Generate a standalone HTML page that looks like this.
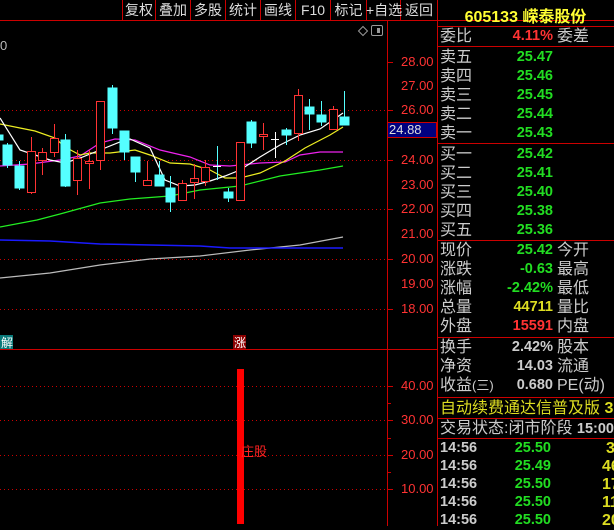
<!DOCTYPE html>
<html><head><meta charset="utf-8"><style>
body{margin:0;background:#000;width:614px;height:526px;overflow:hidden;position:relative;font-family:"Liberation Sans","Noto Sans CJK SC",sans-serif;}
.a{position:absolute;white-space:nowrap}
.btn{position:absolute;top:0;height:20px;line-height:20px;color:#ddd;font-size:14px;text-align:center;white-space:nowrap}
.ax{position:absolute;color:#ff3333;font-size:13px;left:401px}
.rl{position:absolute;left:440px;color:#ccc;font-size:16px;line-height:19px;white-space:nowrap}
.rv{position:absolute;width:114px;left:439px;text-align:right;font-weight:bold;font-size:14.5px;line-height:19px;white-space:nowrap}
.rr{position:absolute;left:557px;color:#ccc;font-size:16px;line-height:19px;white-space:nowrap}
.hl{position:absolute;left:437px;width:177px;height:1px;background:#c00}
.g{color:#22dd22}
</style></head><body>
<svg width="614" height="526" style="position:absolute;left:0;top:0">
<g stroke="#c00" stroke-width="1" fill="none">
<line x1="0" y1="20.5" x2="614" y2="20.5"/>
<line x1="387.5" y1="20" x2="387.5" y2="526"/>
<line x1="437.5" y1="0" x2="437.5" y2="526"/>
<line x1="0" y1="349.5" x2="437" y2="349.5"/>
<line x1="122.5" y1="0" x2="122.5" y2="20"/><line x1="155.5" y1="0" x2="155.5" y2="20"/><line x1="190.5" y1="0" x2="190.5" y2="20"/><line x1="225.5" y1="0" x2="225.5" y2="20"/><line x1="260.5" y1="0" x2="260.5" y2="20"/><line x1="295.5" y1="0" x2="295.5" y2="20"/><line x1="330.5" y1="0" x2="330.5" y2="20"/><line x1="366.5" y1="0" x2="366.5" y2="20"/><line x1="400.5" y1="0" x2="400.5" y2="20"/>
<g stroke-dasharray="1,3">
<line x1="0" y1="110.5" x2="387" y2="110.5"/><line x1="0" y1="160.5" x2="387" y2="160.5"/><line x1="0" y1="209.5" x2="387" y2="209.5"/><line x1="0" y1="259.5" x2="387" y2="259.5"/><line x1="0" y1="309.5" x2="387" y2="309.5"/>
<line x1="0" y1="386.5" x2="387" y2="386.5"/><line x1="0" y1="420.5" x2="387" y2="420.5"/><line x1="0" y1="455.5" x2="387" y2="455.5"/><line x1="0" y1="489.5" x2="387" y2="489.5"/>
</g>
<line x1="387" y1="62.5" x2="393" y2="62.5"/><line x1="387" y1="110.5" x2="393" y2="110.5"/><line x1="387" y1="160.5" x2="393" y2="160.5"/><line x1="387" y1="209.5" x2="393" y2="209.5"/><line x1="387" y1="259.5" x2="393" y2="259.5"/><line x1="387" y1="309.5" x2="393" y2="309.5"/>
<line x1="387" y1="386.5" x2="393" y2="386.5"/><line x1="387" y1="403.5" x2="391" y2="403.5"/><line x1="387" y1="420.5" x2="393" y2="420.5"/><line x1="387" y1="438.5" x2="391" y2="438.5"/><line x1="387" y1="455.5" x2="393" y2="455.5"/><line x1="387" y1="472.5" x2="391" y2="472.5"/><line x1="387" y1="489.5" x2="393" y2="489.5"/>
</g>
<g fill="none" stroke-width="1.2">
<polyline stroke="#bbb" points="0,278 50,273 100,265 150,259 200,256 250,250 300,245 343,237"/>
<polyline stroke="#1a1aff" stroke-width="1.5" points="0,240 50,241 100,244 150,245 200,246 230,248 300,248 343,248"/>
<polyline stroke="#22ee22" points="0,227 37,220 60,214 100,203 130,199 170,196 200,190 240,186 280,176 320,170 343,166"/>
<polyline stroke="#ee22ee" points="0,166 30,164 60,160 80,156 100,143 115,139 135,140 160,150 190,157 210,165 230,166 260,163 285,162 300,155 320,152 343,152"/>
<polyline stroke="#eeee22" points="0,124 20,128 35,131 55,138 65,147 80,155 90,153 110,153 135,150 150,155 170,163 190,164 210,170 225,178 240,178 260,173 285,161 305,148 330,135 343,127"/>
<polyline stroke="#fff" points="0,118 20,150 50,160 65,163 80,158 100,150 120,142 130,139 150,148 165,180 180,186 195,185 210,181 225,176 240,170 260,157 280,145 300,135 320,129 343,113"/>
</g>
<g stroke-width="1">
<g stroke="#55ffff" fill="#55ffff">
<rect x="0" y="135" width="3" height="5"/>
<line x1="7.5" y1="143" x2="7.5" y2="168"/><rect x="3" y="145" width="9" height="20"/>
<line x1="19.5" y1="161" x2="19.5" y2="190"/><rect x="15" y="166" width="9" height="22"/>
<line x1="65.5" y1="134" x2="65.5" y2="187"/><rect x="61" y="140" width="9" height="46"/>
<line x1="112.5" y1="85" x2="112.5" y2="134"/><rect x="108" y="88" width="9" height="40"/>
<line x1="124.5" y1="131" x2="124.5" y2="160"/><rect x="120" y="131" width="9" height="21"/>
<line x1="135.5" y1="157" x2="135.5" y2="182"/><rect x="131" y="157" width="9" height="15"/>
<line x1="159.5" y1="161" x2="159.5" y2="186"/><rect x="155" y="175" width="9" height="11"/>
<line x1="170.5" y1="176" x2="170.5" y2="212"/><rect x="166" y="188" width="9" height="14"/>
<line x1="217.5" y1="146" x2="217.5" y2="180"/>
<line x1="228.5" y1="188" x2="228.5" y2="202"/><rect x="224" y="192" width="9" height="6"/>
<line x1="251.5" y1="120" x2="251.5" y2="148"/><rect x="247" y="122" width="9" height="21"/>
<line x1="286.5" y1="128" x2="286.5" y2="145"/><rect x="282" y="130" width="9" height="5"/>
<line x1="309.5" y1="99" x2="309.5" y2="130"/><rect x="305" y="107" width="9" height="7"/>
<line x1="321.5" y1="101" x2="321.5" y2="126"/><rect x="317" y="115" width="9" height="7"/>
<line x1="344.5" y1="91" x2="344.5" y2="125"/><rect x="340" y="117" width="9" height="8"/>
</g>
<g stroke="#ff3333" fill="#000">
<line x1="31.5" y1="137" x2="31.5" y2="194"/><rect x="27.5" y="151.5" width="8" height="41"/>
<line x1="42.5" y1="148" x2="42.5" y2="175"/><rect x="38.5" y="152.5" width="8" height="8"/>
<line x1="54.5" y1="124" x2="54.5" y2="157"/><rect x="50.5" y="138.5" width="8" height="14"/>
<line x1="77.5" y1="150" x2="77.5" y2="195"/><rect x="73.5" y="158.5" width="8" height="22"/>
<line x1="89.5" y1="150" x2="89.5" y2="189"/><rect x="85.5" y="161.5" width="8" height="2"/>
<line x1="100.5" y1="101" x2="100.5" y2="170"/><rect x="96.5" y="101.5" width="8" height="59"/>
<line x1="147.5" y1="161" x2="147.5" y2="186"/><rect x="143.5" y="180.5" width="8" height="5"/>
<line x1="182.5" y1="180" x2="182.5" y2="200"/><rect x="178.5" y="183.5" width="8" height="17"/>
<line x1="194.5" y1="164" x2="194.5" y2="199"/><rect x="190.5" y="178.5" width="8" height="4"/>
<line x1="205.5" y1="160" x2="205.5" y2="186"/><rect x="201.5" y="167.5" width="8" height="14"/>
<line x1="240.5" y1="142" x2="240.5" y2="201"/><rect x="236.5" y="142.5" width="8" height="58"/>
<line x1="263.5" y1="123" x2="263.5" y2="150"/><rect x="259.5" y="134.5" width="8" height="2"/>
<line x1="298.5" y1="89" x2="298.5" y2="141"/><rect x="294.5" y="95.5" width="8" height="38"/>
<line x1="333.5" y1="106" x2="333.5" y2="129"/><rect x="329.5" y="109.5" width="8" height="20"/>
</g>
<g stroke="#fff"><line x1="213" y1="166.5" x2="221" y2="166.5"/><line x1="271" y1="139.5" x2="279" y2="139.5"/><line x1="275.5" y1="132" x2="275.5" y2="158"/></g>
</g>
<rect x="237" y="369" width="7" height="155" fill="#ff0000"/>
<rect x="0" y="335" width="13" height="14" fill="#0a7a7a"/>
<rect x="233" y="335" width="13" height="14" fill="#8b0000"/>
<path d="M358.5,31 L363,26.5 L367.5,31 L363,35.5 Z" fill="none" stroke="#999"/>
<rect x="371.5" y="25.5" width="11" height="10" rx="1.5" fill="none" stroke="#999"/><rect x="377" y="28" width="3" height="5" fill="#999"/>
<rect x="387.5" y="122.5" width="49" height="15" fill="#000080" stroke="#c00"/>
</svg>
<div class="btn" style="left:123px;width:32px">复权</div>
<div class="btn" style="left:156px;width:34px">叠加</div>
<div class="btn" style="left:191px;width:34px">多股</div>
<div class="btn" style="left:226px;width:34px">统计</div>
<div class="btn" style="left:261px;width:34px">画线</div>
<div class="btn" style="left:296px;width:34px">F10</div>
<div class="btn" style="left:331px;width:35px">标记</div>
<div class="btn" style="left:366px;width:34px">+自选</div>
<div class="btn" style="left:401px;width:36px">返回</div>
<div class="a" style="left:0;top:38px;color:#bbb;font-size:13px">0</div>
<div class="a" style="left:1px;top:334px;color:#fff;font-size:12px">解</div>
<div class="a" style="left:234px;top:334px;color:#fff;font-size:12px">涨</div>
<div class="a" style="left:241px;top:441px;color:#ff2222;font-size:13px">庄股</div>
<div class="ax" style="top:54px">28.00</div>
<div class="ax" style="top:78px">27.00</div>
<div class="ax" style="top:102px">26.00</div>
<div class="a" style="left:389px;top:122px;color:#ddd;font-size:13px">24.88</div>
<div class="ax" style="top:152px">24.00</div>
<div class="ax" style="top:177px">23.00</div>
<div class="ax" style="top:201px">22.00</div>
<div class="ax" style="top:226px">21.00</div>
<div class="ax" style="top:251px">20.00</div>
<div class="ax" style="top:276px">19.00</div>
<div class="ax" style="top:301px">18.00</div>
<div class="ax" style="top:378px">40.00</div>
<div class="ax" style="top:412px">30.00</div>
<div class="ax" style="top:447px">20.00</div>
<div class="ax" style="top:481px">10.00</div>
<div class="a" style="left:437px;width:177px;top:3px;text-align:center;color:#ffff33;font-size:16px;font-weight:bold">605133 嵘泰股份</div>
<div class="hl" style="top:26px"></div>
<div class="rl" style="top:27px">委比</div><div class="rv" style="top:27px;color:#ff3333">4.11%</div><div class="rr" style="top:27px">委差</div>
<div class="hl" style="top:46px"></div>
<div class="rl" style="top:48px">卖五</div><div class="rv g" style="top:48px">25.47</div>
<div class="rl" style="top:67px">卖四</div><div class="rv g" style="top:67px">25.46</div>
<div class="rl" style="top:86px">卖三</div><div class="rv g" style="top:86px">25.45</div>
<div class="rl" style="top:105px">卖二</div><div class="rv g" style="top:105px">25.44</div>
<div class="rl" style="top:124px">卖一</div><div class="rv g" style="top:124px">25.43</div>
<div class="hl" style="top:143px"></div>
<div class="rl" style="top:145px">买一</div><div class="rv g" style="top:145px">25.42</div>
<div class="rl" style="top:164px">买二</div><div class="rv g" style="top:164px">25.41</div>
<div class="rl" style="top:183px">买三</div><div class="rv g" style="top:183px">25.40</div>
<div class="rl" style="top:202px">买四</div><div class="rv g" style="top:202px">25.38</div>
<div class="rl" style="top:221px">买五</div><div class="rv g" style="top:221px">25.36</div>
<div class="hl" style="top:240px"></div>
<div class="rl" style="top:241px">现价</div><div class="rv g" style="top:241px">25.42</div><div class="rr" style="top:241px">今开</div>
<div class="rl" style="top:260px">涨跌</div><div class="rv g" style="top:260px">-0.63</div><div class="rr" style="top:260px">最高</div>
<div class="rl" style="top:279px">涨幅</div><div class="rv g" style="top:279px">-2.42%</div><div class="rr" style="top:279px">最低</div>
<div class="rl" style="top:298px">总量</div><div class="rv" style="top:298px;color:#dddd22">44711</div><div class="rr" style="top:298px">量比</div>
<div class="rl" style="top:317px">外盘</div><div class="rv" style="top:317px;color:#ff3333">15591</div><div class="rr" style="top:317px">内盘</div>
<div class="hl" style="top:337px"></div>
<div class="rl" style="top:338px">换手</div><div class="rv" style="top:338px;color:#ccc">2.42%</div><div class="rr" style="top:338px">股本</div>
<div class="rl" style="top:357px">净资</div><div class="rv" style="top:357px;color:#ccc">14.03</div><div class="rr" style="top:357px">流通</div>
<div class="rl" style="top:376px">收益<span style="font-size:13px">(三)</span></div><div class="rv" style="top:376px;color:#ccc">0.680</div><div class="rr" style="top:376px">PE(动)</div>
<div class="hl" style="top:397px"></div>
<div class="rl" style="top:399px;color:#dddd22">自动续费通达信普及版 <b>3</b></div>
<div class="hl" style="top:418px"></div>
<div class="rl" style="top:419px">交易状态:闭市阶段 <b style="font-size:14.5px">15:00</b></div>
<div class="hl" style="top:438px"></div>
<div class="rl" style="top:439px;font-weight:bold;font-size:14.5px">14:56</div><div class="rv g" style="top:439px;width:112px">25.50</div><div class="rr" style="top:439px;left:606px;color:#dddd22;font-weight:bold">3</div>
<div class="rl" style="top:457px;font-weight:bold;font-size:14.5px">14:56</div><div class="rv g" style="top:457px;width:112px">25.49</div><div class="rr" style="top:457px;left:602px;color:#dddd22;font-weight:bold">46</div>
<div class="rl" style="top:475px;font-weight:bold;font-size:14.5px">14:56</div><div class="rv g" style="top:475px;width:112px">25.50</div><div class="rr" style="top:475px;left:602px;color:#dddd22;font-weight:bold">17</div>
<div class="rl" style="top:493px;font-weight:bold;font-size:14.5px">14:56</div><div class="rv g" style="top:493px;width:112px">25.50</div><div class="rr" style="top:493px;left:602px;color:#dddd22;font-weight:bold">11</div>
<div class="rl" style="top:511px;font-weight:bold;font-size:14.5px">14:56</div><div class="rv g" style="top:511px;width:112px">25.50</div><div class="rr" style="top:511px;left:602px;color:#dddd22;font-weight:bold">20</div>
</body></html>
